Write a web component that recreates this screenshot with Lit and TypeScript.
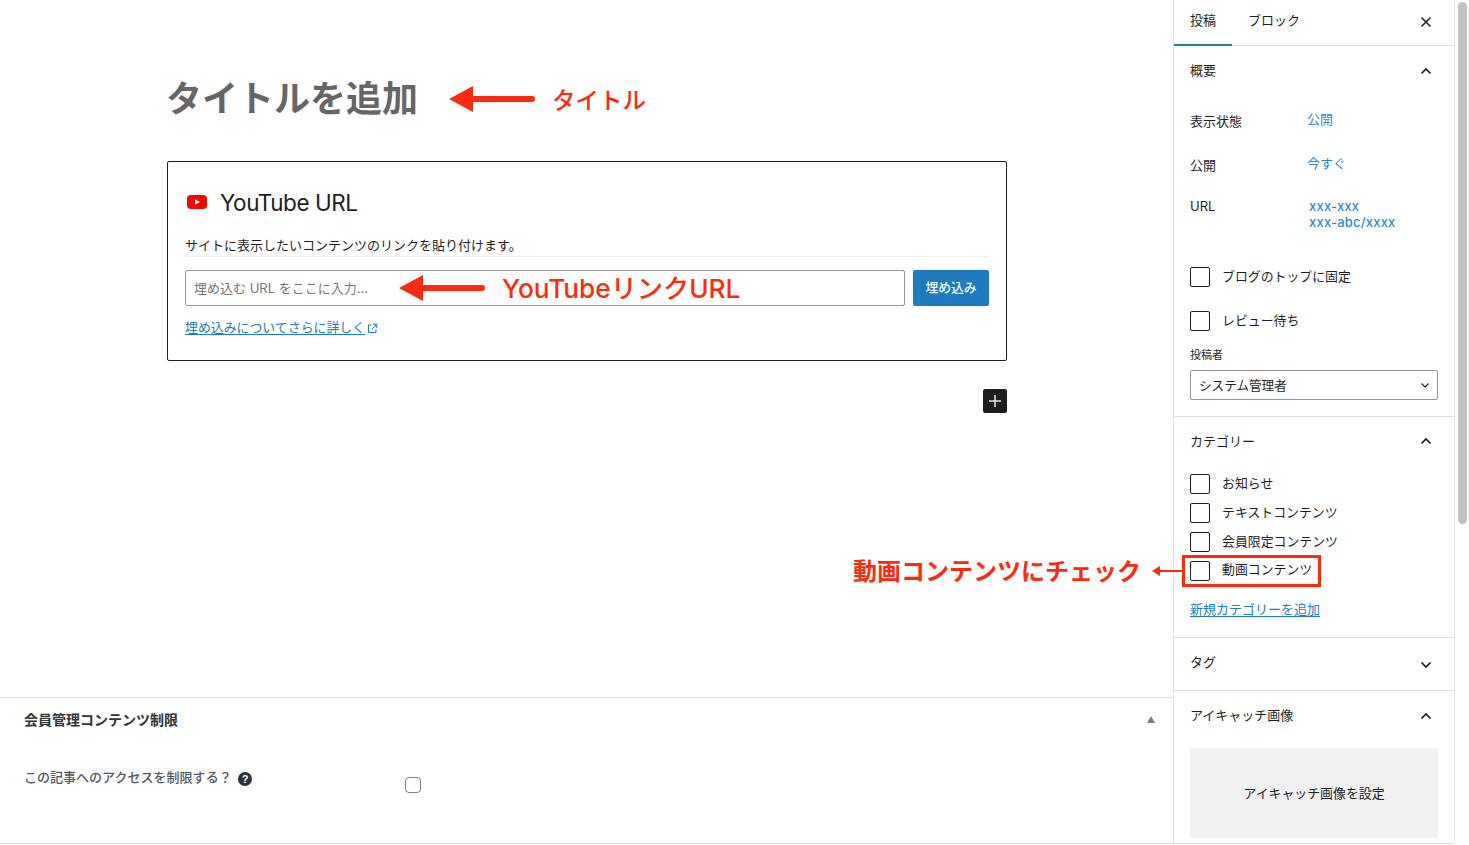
import { LitElement, html, css, svg } from "lit";
import { customElement } from "lit/decorators.js";

const up = svg`<path d="M6.5 12.5 11 8l4.5 4.5" fill="none" stroke="#1e1e1e" stroke-width="1.7"/>`;
const down = svg`<path d="M6.5 8.5 11 13l4.5-4.5" fill="none" stroke="#1e1e1e" stroke-width="1.7"/>`;
const chev = (open: boolean) => html`<svg class="chev" width="22" height="22" viewBox="0 0 22 22">${open ? up : down}</svg>`;
const arrow = (w: number, h: number, hw: number, t: number) => html`<svg width="${w}" height="${h}" viewBox="0 0 ${w} ${h}"><path d="M0 ${h / 2}L${hw} 0V${h}Z" fill="#ff2a0e"/><path d="M${hw - 1} ${h / 2}H${w - t / 2}" stroke="#ff2a0e" stroke-width="${t}" stroke-linecap="round"/></svg>`;

@customElement("app-root")
export class AppRoot extends LitElement {
  static styles = css`
    :host { display: block; width: 1469px; height: 845px; overflow: hidden; background: #fff; color: #1e1e1e;
      font-family: "Inter", "Noto Sans CJK JP", sans-serif; font-size: 13px; position: relative; }
    * { box-sizing: border-box; }
    .cjk { font-family: "Noto Sans CJK JP", sans-serif; }
    .page { display: flex; height: 843px; }
    .foot { height: 1px; background: #e0e0e0; width: 1454px; }
    .main { width: 1174px; border-right: 1px solid #e0e0e0; display: flex; flex-direction: column; }
    .editor { flex: 1; padding: 0 166px 0 167px; }
    .title { margin: 76px 0 0; height: 42px; line-height: 42px; font-size: 36px; font-weight: 700; color: #666; display: flex; align-items: center; gap: 31px; white-space: nowrap; }
    .title-text { margin-top: -3px; margin-left: -1px; }
    .title-note { display: flex; align-items: center; gap: 17px; margin-top: 3px; }
    .red { color: #ff2a0e; font-weight: 500; white-space: nowrap; }
    .title-note .red { font-size: 23.5px; line-height: 30px; }
    .block { margin-top: 43px; height: 200px; border: 1px solid #1e1e1e; border-radius: 2px; padding: 27px 17px 0; }
    .block-head { display: flex; align-items: center; gap: 13px; height: 26px; margin-left: 2px; font-size: 22.5px; letter-spacing: -0.45px; }
    .yt { display: block; }
    .instr { margin-top: 21px; height: 21px; line-height: 18px; font-size: 13px; color: #1e1e1e; border-bottom: 1px solid #f0f0f0; white-space: nowrap; }
    .row { display: flex; gap: 8px; margin-top: 13px; height: 36px; }
    .url { flex: 1; border: 1px solid #949494; border-radius: 2px; display: flex; align-items: center; padding-left: 8px; gap: 31px; color: #757575; font-size: 13px; }
    .ph { width: 174px; white-space: nowrap; margin-top: -2px; }
    .url-note { display: flex; align-items: center; gap: 17px; }
    .url-note .red { font-size: 26.2px; line-height: 34px; margin-top: 1px; }
    .embed { width: 76px; border-radius: 2px; background: #1c7cbd; color: #fff; display: flex; align-items: center; justify-content: center; font-size: 12.8px; font-weight: 500; padding-bottom: 3px; }
    .learn { margin-top: 13px; display: flex; align-items: center; gap: 2px; font-size: 12.9px; line-height: 18px; color: #1c7cbd; white-space: nowrap; }
    .learn span { text-decoration: underline; text-underline-offset: 2px; }
    .plus-row { display: flex; justify-content: flex-end; margin-top: 28px; }
    .plus { width: 24px; height: 24px; background: #1e1e1e; border-radius: 2px; display: flex; align-items: center; justify-content: center; }
    .meta { height: 146px; border-top: 1px solid #e0e0e0; padding: 0 18px 0 24px; }
    .meta-head { display: flex; justify-content: space-between; align-items: center; height: 44px; font-size: 14px; font-weight: 700; color: #333; }
    .meta-head span:first-child { margin-top: -3px; }
    .tri { width: 0; height: 0; border: 4.5px solid transparent; border-top: 0; border-bottom: 7px solid #7a7f85; margin-top: -2px; }
    .meta-row { display: flex; margin-top: 15px; }
    .meta-label { width: 381px; display: flex; align-items: center; gap: 6px; height: 32px; font-size: 13px; font-weight: 500; letter-spacing: 0.02px; color: #50575e; }
    .meta-text { margin-top: 6px; }
    .help { display: block; margin-top: 11px; }
    .meta-check { width: 16px; height: 16px; border: 1px solid #7a7f85; border-radius: 4px; margin-top: 20px; }
    .side { width: 280px; flex: none; }
    .tabs { height: 46px; border-bottom: 1px solid #e0e0e0; display: flex; align-items: center; font-size: 13px; }
    .tab { height: 46px; display: flex; align-items: center; padding: 0 16px 6px; }
    .tab.on { width: 58px; box-shadow: inset 0 -2px 0 #1c7cbd; }
    .close { margin-left: auto; margin-right: 22px; margin-top: -2px; display: block; }
    .sec { border-bottom: 1px solid #e0e0e0; padding: 0 16px; }
    .sec-head { display: flex; justify-content: space-between; align-items: center; font-size: 13px; color: #1e1e1e; height: 52px; }
    .sec-head span { margin-top: -5px; }
    .sec-head.cat span { margin-top: -3px; }
    .chev { margin-right: 1px; display: block; }
    .chev.low { margin-top: 2px; }
    .kv { display: flex; font-size: 13px; }
    .k { width: 117px; color: #1e1e1e; }
    .v { color: #2f8ac6; }
    .ck { display: flex; align-items: center; gap: 12px; font-size: 12.9px; }
    .ck > span.t { margin-top: -4px; }
    .ck > span.t.vid { margin-top: -6px; }
    .box { width: 20px; height: 20px; border: 1px solid #1e1e1e; border-radius: 2px; background: #fff; flex: none; }
    .author { font-size: 11px; margin-top: 16px; height: 16px; line-height: 16px; }
    .select { margin-top: 7px; height: 30px; border: 1px solid #949494; border-radius: 2px; display: flex; align-items: center; justify-content: space-between; padding: 0 7px 0 8px; font-size: 12.6px; }
    .select span { margin-top: -2px; }
    .link { color: #1c7cbd; text-decoration: underline; text-underline-offset: 2px; font-size: 13px; }
    .feat { margin: 5px 0 0; height: 90px; background: #f0f0f0; border-radius: 2px; display: flex; align-items: center; justify-content: center; font-size: 12.9px; padding-bottom: 2px; }
    .scroll { width: 15px; flex: none; border-left: 1px solid #e8e8e8; background: #fff; padding: 2px 3px 0 3px; }
    .thumb { height: 522px; width: 9px; background: #c1c1c1; border-radius: 5px; }
    .check-note { position: absolute; left: 853px; top: 554px; display: flex; align-items: center; gap: 11px; }
    .check-note svg { margin-top: -2px; }
    .check-note .red { font-size: 24px; line-height: 36px; font-weight: 700; }
    .check-wrap { position: relative; }
    .hi { position: absolute; left: -8px; top: -6px; width: 139px; height: 32px; border: 3px solid #ff2a0e; }
  `;

  render() {
    return html`
      <div class="page">
        <div class="main">
          <div class="editor">
            <div class="title cjk"><span class="title-text">タイトルを追加</span>
              <div class="title-note">${arrow(86, 26, 24, 6)}<span class="red">タイトル</span></div>
            </div>
            <div class="block">
              <div class="block-head">
                <svg class="yt" width="20" height="14" viewBox="0 0 20 14"><rect width="20" height="14" rx="4" fill="#f00"/><path d="M8 4.2v5.6L13 7z" fill="#fff"/></svg>
                YouTube URL
              </div>
              <div class="instr">サイトに表示したいコンテンツのリンクを貼り付けます。</div>
              <div class="row">
                <div class="url"><span class="ph">埋め込む URL をここに入力...</span>
                  <div class="url-note">${arrow(86, 26, 24, 6)}<span class="red">YouTubeリンクURL</span></div>
                </div>
                <div class="embed">埋め込み</div>
              </div>
              <div class="learn"><span>埋め込みについてさらに詳しく</span>
                <svg width="11" height="11" viewBox="0 0 11 11" fill="none" stroke="#1c7cbd" stroke-width="1"><path d="M4.5 2H1.5v7.5H9V6.5M6 1.2h3.8V5M9.6 1.4 5 6"/></svg>
              </div>
            </div>
            <div class="plus-row"><div class="plus"><svg width="14" height="14" viewBox="0 0 14 14"><path d="M7 1v12M1 7h12" stroke="#e6e6e6" stroke-width="1.5"/></svg></div></div>
          </div>
          <div class="meta">
            <div class="meta-head"><span>会員管理コンテンツ制限</span><span class="tri"></span></div>
            <div class="meta-row">
              <div class="meta-label"><span class="meta-text">この記事へのアクセスを制限する？</span>
                <svg class="help" width="14" height="14" viewBox="0 0 14 14"><circle cx="7" cy="7" r="7" fill="#2c3338"/><text x="7" y="10.8" text-anchor="middle" font-size="11" font-weight="700" font-family="Liberation Sans" fill="#fff">?</text></svg>
              </div>
              <div class="meta-check"></div>
            </div>
          </div>
        </div>
        <div class="side">
          <div class="tabs">
            <div class="tab on">投稿</div>
            <div class="tab">ブロック</div>
            <svg class="close" width="12" height="12" viewBox="0 0 12 12"><path d="M1.5 1.5 10.5 10.5M10.5 1.5 1.5 10.5" stroke="#1e1e1e" stroke-width="1.5"/></svg>
          </div>
          <div class="sec" style="height:371px">
            <div class="sec-head"><span>概要</span> ${chev(true)}</div>
            <div class="kv" style="margin-top:13px;height:44px"><div class="k">表示状態</div><div class="v" style="margin-top:-2px">公開</div></div>
            <div class="kv" style="height:42px"><div class="k">公開</div><div class="v" style="margin-top:-2px">今すぐ</div></div>
            <div class="kv" style="height:70px;line-height:16px"><div class="k" style="margin-top:1px">URL</div><div class="v" style="margin:1px 0 0 2px;font-weight:500;letter-spacing:.2px">xxx-xxx<br>xxx-abc/xxxx</div></div>
            <div class="ck" style="height:20px"><span class="box"></span><span class="t">ブログのトップに固定</span></div>
            <div class="ck" style="height:20px;margin-top:24px"><span class="box"></span><span class="t">レビュー待ち</span></div>
            <div class="author">投稿者</div>
            <div class="select"><span>システム管理者</span>
              <svg width="10" height="10" viewBox="0 0 10 10"><path d="M1.5 3.5 5 7l3.5-3.5" fill="none" stroke="#1e1e1e" stroke-width="1.1"/></svg>
            </div>
          </div>
          <div class="sec" style="height:221px">
            <div class="sec-head cat" style="height:50px"><span>カテゴリー</span> ${chev(true)}</div>
            <div class="ck" style="height:20px;margin-top:7px"><span class="box"></span><span class="t">お知らせ</span></div>
            <div class="ck" style="height:20px;margin-top:9px"><span class="box"></span><span class="t">テキストコンテンツ</span></div>
            <div class="ck" style="height:20px;margin-top:9px"><span class="box"></span><span class="t">会員限定コンテンツ</span></div>
            <div class="ck check-wrap" style="height:20px;margin-top:9px"><span class="box"></span><span class="t vid">動画コンテンツ</span><span class="hi"></span></div>
            <div style="margin-top:19px;line-height:18px"><span class="link">新規カテゴリーを追加</span></div>
          </div>
          <div class="sec" style="height:53px">
            <div class="sec-head"><span>タグ</span> <svg class="chev low" width="22" height="22" viewBox="0 0 22 22">${down}</svg></div>
          </div>
          <div class="sec" style="border:0">
            <div class="sec-head"><span>アイキャッチ画像</span> ${chev(true)}</div>
            <div class="feat">アイキャッチ画像を設定</div>
          </div>
        </div>
        <div class="scroll"><div class="thumb"></div></div>
      </div>
      <div class="foot"></div>
      <div class="check-note"><span class="red">動画コンテンツにチェック</span>${arrow(32, 10, 8, 2)}</div>
    `;
  }
}
